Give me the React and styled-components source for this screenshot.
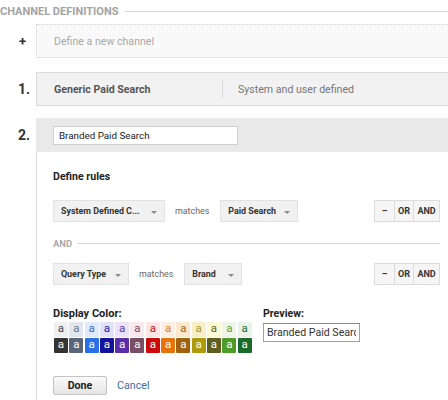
import React from "react";
import styled, { createGlobalStyle } from "styled-components";

const Global = createGlobalStyle`
  html, body { margin: 0; padding: 0; background: #fff; }
  body { font-family: Roboto, "Noto Sans", Arial, sans-serif; width: 448px; height: 400px; overflow: hidden; }
  * { box-sizing: border-box; }
`;

const Page = styled.div`
  width: 448px;
  height: 400px;
  overflow: hidden;
`;

const SectionHeader = styled.div`
  display: flex;
  align-items: center;
  height: 22px;
  margin-bottom: 2px;
  gap: 7px;
`;

const SectionTitle = styled.span`
  font-size: 11px;
  font-weight: 700;
  color: #a3a3a3;
  white-space: nowrap;
`;

const Rule = styled.div`
  flex: 1;
  height: 1px;
  background: #d6d6d6;
`;

const ChannelRow = styled.div`
  display: flex;
  align-items: flex-start;
  margin-bottom: ${(p) => p.$mb || 0}px;
`;

const Num = styled.div`
  width: 36px;
  flex: none;
  height: 34px;
  display: flex;
  align-items: center;
  padding-left: ${(p) => p.$pl || 18}px;
  font-size: ${(p) => (p.$plus ? 13 : 14)}px;
  font-weight: 700;
  color: #333;
`;

const NewBox = styled.div`
  flex: 1;
  height: 34px;
  background: #f9f9f9;
  border: 1px dotted #d4d4d4;
  border-right: none;
  display: flex;
  align-items: center;
  padding-left: 17px;
  font-size: 10.6px;
  color: #a8a8a8;
`;

const DefBox = styled.div`
  flex: 1;
  height: 34px;
  background: #f2f2f2;
  border: 1px solid #dcdcdc;
  border-right: none;
  display: flex;
  align-items: center;
  padding-left: 17px;
`;

const DefName = styled.span`
  font-size: 10.6px;
  font-weight: 700;
  color: #555;
  width: 168px;
`;

const Divider = styled.span`
  width: 1px;
  height: 19px;
  background: #dadada;
  margin-right: 15px;
`;

const DefType = styled.span`
  font-size: 10.6px;
  color: #777;
`;

const EditCol = styled.div`
  flex: 1;
  display: flex;
  flex-direction: column;
`;

const EditHead = styled.div`
  height: 34px;
  background: #e9e9e9;
  display: flex;
  align-items: center;
  padding-left: 17px;
`;

const NameInput = styled.input`
  width: 185px;
  height: 19px;
  border: 1px solid #cfcfcf;
  background: #fff;
  font-family: Roboto, Arial, sans-serif;
  font-size: 9.8px;
  color: #222;
  padding: 0 5px;
  outline: none;
`;

const EditBody = styled.div`
  border-left: 1px solid #dcdcdc;
  padding: 18px 8px 40px 16px;
  height: 260px;
`;

const BodyTitle = styled.div`
  font-size: 10.6px;
  font-weight: 700;
  color: #222;
  line-height: 14px;
  margin-bottom: 16px;
`;

const RuleRow = styled.div`
  display: flex;
  align-items: center;
  height: 22px;
`;

const Select = styled.div`
  width: ${(p) => p.$w}px;
  height: 22px;
  background: #f1f1f1;
  border: 1px solid #e2e2e2;
  display: flex;
  align-items: center;
  justify-content: space-between;
  padding: 0 7px 0 7px;
  font-size: 8.9px;
  font-weight: 700;
  color: #333;
  white-space: nowrap;
`;

const Caret = styled.span`
  width: 0;
  height: 0;
  border-left: 3px solid transparent;
  border-right: 3px solid transparent;
  border-top: 3px solid #8a8a8a;
  margin-top: 2px;
`;

const Matches = styled.span`
  font-size: 8.9px;
  color: #666;
  margin: 0 11px 0 10px;
`;

const Spacer = styled.div`
  flex: 1;
`;

const BtnGroup = styled.div`
  display: flex;
  height: 22px;
  border: 1px solid #dcdcdc;
  background: #f5f5f5;
`;

const GroupBtn = styled.span`
  width: ${(p) => p.$w}px;
  display: flex;
  align-items: center;
  justify-content: center;
  font-size: 9px;
  font-weight: 700;
  color: #333;
  & + & { border-left: 1px solid #dcdcdc; }
`;

const AndSep = styled.div`
  display: flex;
  align-items: center;
  gap: 6px;
  height: 14px;
  margin: 14px 0 13px;
`;

const AndLabel = styled.span`
  font-size: 9.4px;
  font-weight: 700;
  color: #aaa;
`;

const Bottom = styled.div`
  display: flex;
  margin-top: 21px;
`;

const ColorCol = styled.div`
  width: 210px;
`;

const Label = styled.div`
  font-size: ${(p) => p.$fs || 11}px;
  font-weight: 700;
  color: #222;
  line-height: 16px;
`;

const SwatchGrid = styled.div`
  display: grid;
  grid-template-columns: repeat(13, 14px);
  grid-auto-rows: 15px;
  column-gap: 1.3px;
  row-gap: 1px;
  padding-left: 1px;
`;

const Swatch = styled.span`
  background: ${(p) => p.$bg};
  color: ${(p) => p.$fg};
  border-radius: 1px;
  display: flex;
  align-items: center;
  justify-content: center;
  font-size: 11.5px;
  line-height: 1;
  padding-bottom: 1px;
`;

const PreviewCol = styled.div`
  display: flex;
  flex-direction: column;
`;

const PreviewInput = styled.input`
  width: 97px;
  height: 19px;
  margin-top: 1px;
  border: 1px solid #a0a0a0;
  border-top-color: #888;
  font-family: Roboto, Arial, sans-serif;
  font-size: 10.6px;
  color: #333;
  padding: 0 3px;
  outline: none;
  background: #fff;
`;

const Actions = styled.div`
  display: flex;
  align-items: center;
  margin-top: 23px;
`;

const DoneBtn = styled.button`
  width: 54px;
  height: 19px;
  border: 1px solid #c4c4c4;
  border-radius: 2px;
  background: linear-gradient(#fafafa, #e4e4e4);
  font-family: Roboto, Arial, sans-serif;
  font-size: 10.7px;
  font-weight: 700;
  color: #222;
  padding: 0;
`;

const CancelLink = styled.a`
  margin-left: 10px;
  font-size: 10.7px;
  color: #3b6ea5;
  text-decoration: none;
`;

const light = [
  ["#efefef", "#444"],
  ["#e1e5ee", "#6a7488"],
  ["#e1eafb", "#2f6fd6"],
  ["#e0e0f7", "#1e1ea8"],
  ["#ebe2fa", "#5e35b1"],
  ["#f8e9ef", "#7e4a64"],
  ["#fde5e5", "#cc1111"],
  ["#fdeee1", "#e47a1c"],
  ["#fbe8cf", "#a0661c"],
  ["#f9efc6", "#a8961a"],
  ["#f9f9d8", "#5c5c22"],
  ["#eef5e8", "#5aa032"],
  ["#e9f2e9", "#1d6b2b"],
];

const dark = [
  "#343434",
  "#5b6579",
  "#2a6fe6",
  "#15159c",
  "#5a2ea8",
  "#7a4e63",
  "#cc0a0a",
  "#e6720c",
  "#a1620f",
  "#ae9a0c",
  "#5d5d1f",
  "#4f9b27",
  "#1a6a29",
];

function RuleLine({ field, fw, value, vw }) {
  return (
    <RuleRow>
      <Select $w={fw}>
        <span>{field}</span>
        <Caret />
      </Select>
      <Matches>matches</Matches>
      <Select $w={vw}>
        <span>{value}</span>
        <Caret />
      </Select>
      <Spacer />
      <BtnGroup>
        <GroupBtn $w={19}>–</GroupBtn>
        <GroupBtn $w={19}>OR</GroupBtn>
        <GroupBtn $w={26}>AND</GroupBtn>
      </BtnGroup>
    </RuleRow>
  );
}

export default function App() {
  return (
    <Page>
      <Global />
      <SectionHeader>
        <SectionTitle>CHANNEL DEFINITIONS</SectionTitle>
        <Rule />
      </SectionHeader>

      <ChannelRow $mb={14}>
        <Num $plus $pl={19}>+</Num>
        <NewBox>Define a new channel</NewBox>
      </ChannelRow>

      <ChannelRow $mb={12}>
        <Num>1.</Num>
        <DefBox>
          <DefName>Generic Paid Search</DefName>
          <Divider />
          <DefType>System and user defined</DefType>
        </DefBox>
      </ChannelRow>

      <ChannelRow>
        <Num>2.</Num>
        <EditCol>
          <EditHead>
            <NameInput defaultValue="Branded Paid Search" />
          </EditHead>
          <EditBody>
            <BodyTitle>Define rules</BodyTitle>
            <RuleLine field="System Defined C..." fw={112} value="Paid Search" vw={78} />
            <AndSep>
              <AndLabel>AND</AndLabel>
              <Rule />
            </AndSep>
            <RuleLine field="Query Type" fw={76} value="Brand" vw={58} />
            <Bottom>
              <ColorCol>
                <Label $fs={11}>Display Color:</Label>
                <SwatchGrid>
                  {light.map(([bg, fg], i) => (
                    <Swatch key={"l" + i} $bg={bg} $fg={fg}>a</Swatch>
                  ))}
                  {dark.map((bg, i) => (
                    <Swatch key={"d" + i} $bg={bg} $fg="#fff">a</Swatch>
                  ))}
                </SwatchGrid>
              </ColorCol>
              <PreviewCol>
                <Label $fs={10.6}>Preview:</Label>
                <PreviewInput readOnly value="Branded Paid Search" />
              </PreviewCol>
            </Bottom>
            <Actions>
              <DoneBtn>Done</DoneBtn>
              <CancelLink href="#">Cancel</CancelLink>
            </Actions>
          </EditBody>
        </EditCol>
      </ChannelRow>
    </Page>
  );
}
